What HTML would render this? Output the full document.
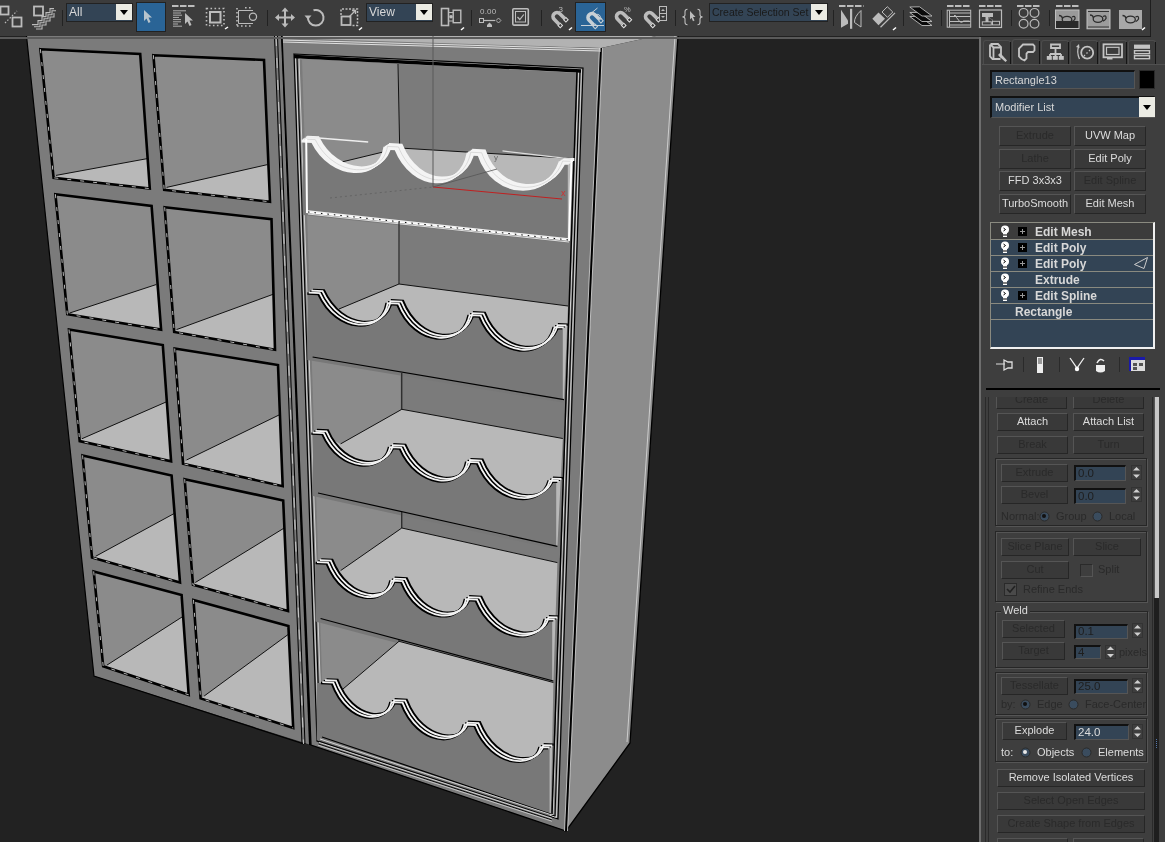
<!DOCTYPE html>
<html><head><meta charset="utf-8"><style>
html,body{margin:0;padding:0;}
#wrap{position:absolute;left:0;top:0;width:1165px;height:842px;will-change:transform;}
body{width:1165px;height:842px;overflow:hidden;position:relative;background:#3e3e3e;font-family:"Liberation Sans",sans-serif;}
.ab{position:absolute;}
.clip{position:absolute;overflow:hidden;}
.btn{position:absolute;box-sizing:border-box;background:#393939;border:1px solid #262626;border-top-color:#555;border-left-color:#555;text-align:center;font-size:11px;white-space:nowrap;overflow:hidden;}
.fld{position:absolute;box-sizing:border-box;background:#334455;border-top:2px solid #111;border-left:2px solid #111;border-right:1px solid #555;border-bottom:1px solid #555;font-size:11.5px;padding-left:2px;white-space:nowrap;overflow:hidden;}
.lbl{position:absolute;font-size:11px;line-height:13px;white-space:nowrap;}
.grp{position:absolute;box-sizing:border-box;border:1px solid #262626;box-shadow:1px 1px 0 #555 inset, 1px 1px 0 #555;}
.tab{position:absolute;box-sizing:border-box;background:#3b3b3b;border:1px solid #4c4c4c;border-bottom:none;border-radius:3px 3px 0 0;}
.stk{position:absolute;font-size:12px;font-weight:bold;color:#d8d8d8;white-space:nowrap;}
</style></head><body><div id="wrap">
<div class="ab" style="left:0;top:0;width:1151px;height:37px;background:#3c3c3c;border-bottom:1px solid #1a1a1a;box-sizing:border-box"></div>
<div class="ab" style="left:1150px;top:0;width:1px;height:36px;background:#1e1e1e"></div>
<div class="ab" style="left:62px;top:10px;width:1px;height:16px;background:#222"></div>
<div class="fld" style="left:66px;top:3px;width:67px;height:19px;line-height:17px;color:#d8d8d8;font-size:12px;padding-left:2px;box-sizing:border-box;border:1px solid #222;overflow:hidden;white-space:nowrap">All</div>
<div class="ab" style="left:116px;top:4px;width:16px;height:16px;background:#ebebe3"></div>
<svg class="ab" style="left:116px;top:4px" width="16" height="16"><path d="M4,6 h8 l-4,5z" fill="#000"/></svg>
<div class="ab" style="left:136px;top:2px;width:30px;height:30px;background:#2a6496;border:1px solid #222;box-sizing:border-box"></div>
<div class="ab" style="left:267px;top:10px;width:1px;height:16px;background:#222"></div>
<div class="ab" style="left:471px;top:10px;width:1px;height:16px;background:#222"></div>
<div class="ab" style="left:541px;top:10px;width:1px;height:16px;background:#222"></div>
<div class="ab" style="left:675px;top:10px;width:1px;height:16px;background:#222"></div>
<div class="ab" style="left:833px;top:10px;width:1px;height:16px;background:#222"></div>
<div class="ab" style="left:903px;top:10px;width:1px;height:16px;background:#222"></div>
<div class="ab" style="left:941px;top:10px;width:1px;height:16px;background:#222"></div>
<div class="ab" style="left:1011px;top:10px;width:1px;height:16px;background:#222"></div>
<div class="ab" style="left:1049px;top:10px;width:1px;height:16px;background:#222"></div>
<div class="fld" style="left:366px;top:3px;width:67px;height:19px;line-height:17px;color:#d8d8d8;font-size:12px;padding-left:2px;box-sizing:border-box;border:1px solid #222;overflow:hidden;white-space:nowrap">View</div>
<div class="ab" style="left:416px;top:4px;width:16px;height:16px;background:#ebebe3"></div>
<svg class="ab" style="left:416px;top:4px" width="16" height="16"><path d="M4,6 h8 l-4,5z" fill="#000"/></svg>
<div class="fld" style="left:709px;top:3px;width:119px;height:19px;line-height:17px;color:#1a1a1a;font-size:10.5px;padding-left:2px;box-sizing:border-box;border:1px solid #222;overflow:hidden;white-space:nowrap">Create Selection Set</div>
<div class="ab" style="left:811px;top:4px;width:16px;height:16px;background:#ebebe3"></div>
<svg class="ab" style="left:811px;top:4px" width="16" height="16"><path d="M4,6 h8 l-4,5z" fill="#000"/></svg>
<div class="ab" style="left:575px;top:2px;width:31px;height:30px;background:#2a6496;border:1px solid #222;box-sizing:border-box"></div>
<svg class="ab" style="left:0;top:0" width="1151" height="36">
<g fill="none" stroke="#bcbcbc" stroke-width="1.8">
<rect x="0.5" y="6.5" width="8" height="8"/><rect x="12.5" y="17.5" width="9" height="9"/>
<rect x="34" y="6.5" width="9" height="9"/>
</g>
<path d="M5,23 L17,11" stroke="#bcbcbc" stroke-width="1.2" stroke-dasharray="1.5 1.8"/>
<g fill="none" stroke="#bcbcbc" stroke-width="1.1">
<path d="M32,24.6 h6 v-4 h4 v-4 h4 v-4 h4 v-4 h4"/>
<path d="M34,26.8 h6 v-4 h4 v-4 h4 v-4 h4 v-4 h4"/>
<path d="M36,29 h6 v-4 h4 v-4 h4 v-4 h4 v-4"/>
</g>
<!-- select by name -->
<path d="M172,6 h22.5" stroke="#bcbcbc" stroke-width="1.8" stroke-dasharray="6.5 1.5"/>
<g stroke="#bcbcbc" stroke-width="0.9">
<path d="M173,10.8 h13 M173,13 h8 M173,15.2 h9 M173,17.4 h6 M173,19.6 h8 M173,21.8 h8 M173,24 h5 M173,26.2 h9"/>
</g>
<path d="M185,13 l8,7.5 h-3.5 l2,4.5 -2,1 -2,-4.5 -2.5,2.5z" fill="#bcbcbc"/>
<!-- active select -->
<path d="M144,10 l8,7.5 h-3.5 l2,4.5 -2,1 -2,-4.5 -2.5,2.5z" fill="#b8c4cc"/>
<!-- region -->
<rect x="206.5" y="8.5" width="17.5" height="17" fill="none" stroke="#bcbcbc" stroke-width="1.6" stroke-dasharray="1.6 2.4"/>
<rect x="210" y="12" width="10.5" height="10.5" fill="none" stroke="#bcbcbc" stroke-width="2"/>
<path d="M225,29 l3,-2" stroke="#fff" stroke-width="1.5"/>
<!-- window crossing -->
<path d="M245,7.8 h7 M237,8 v19 M237,26 h16" stroke="#bcbcbc" stroke-width="1.6" stroke-dasharray="1.6 2.4" fill="none"/>
<path d="M253,10.5 h-14.5 v13 h14.5" stroke="#bcbcbc" stroke-width="1" fill="none"/>
<circle cx="253" cy="16.7" r="3.6" fill="#3c3c3c" stroke="#bcbcbc" stroke-width="1.2"/>
<!-- move -->
<g stroke="#bcbcbc" stroke-width="2" fill="none"><path d="M285,10 v15 M277.5,17.5 h15"/></g>
<g fill="#bcbcbc"><path d="M285,7.5 l-3.5,4 h7z M285,27.5 l-3.5,-4 h7z M275,17.5 l4,-3.5 v7z M295,17.5 l-4,-3.5 v7z"/></g>
<!-- rotate -->
<path d="M313.5,10.3 a7.8,7.8 0 1,1 -5.5,6.5" stroke="#bcbcbc" stroke-width="2" fill="none"/>
<path d="M304.5,15.5 l3.5,4 l3.5,-4z" fill="#bcbcbc"/>
<!-- scale -->
<path d="M341,15 v-6 h16.5 v16.5 h-6" stroke="#bcbcbc" stroke-width="1.5" stroke-dasharray="2 1.5" fill="none"/>
<rect x="341.5" y="16.5" width="9" height="8.5" stroke="#bcbcbc" stroke-width="1.8" fill="none"/>
<path d="M349,17 l6.5,-6.5 M352,10.5 h3.5 v3.5" stroke="#bcbcbc" stroke-width="1.3" fill="none"/>
<path d="M359,30 l3,-2.5" stroke="#fff" stroke-width="1.5"/>
<!-- align -->
<g stroke="#bcbcbc" fill="none">
<rect x="441.5" y="8.5" width="7" height="17" stroke-width="1.6"/>
<rect x="453.2" y="10.2" width="7.6" height="12.5" stroke-width="1.4"/>
<path d="M448.5,12.5 h5 M448.5,21 h5" stroke-width="1"/>
</g>
<circle cx="451" cy="16.8" r="1.8" fill="#bcbcbc"/>
<path d="M461,30 l3,-2.5" stroke="#fff" stroke-width="1.5"/>
<!-- 0.00 -->
<text x="480" y="14.3" font-family="Liberation Sans" font-size="8" fill="#bcbcbc" letter-spacing="0.2">0.00</text>
<rect x="479.5" y="18.5" width="4" height="4" fill="none" stroke="#bcbcbc" stroke-width="1"/>
<path d="M484,20.5 h11" stroke="#bcbcbc" stroke-width="1.2"/>
<path d="M498.5,18 l2.4,2.5 -2.4,2.5 -2.4,-2.5z" fill="none" stroke="#bcbcbc" stroke-width="0.9"/>
<path d="M487,27 v-2 l2.5,-2.5 l2.5,2.5 v2z" fill="#bcbcbc"/>
<!-- checkbox -->
<rect x="512.8" y="8.8" width="15.5" height="16.3" rx="1" fill="none" stroke="#bcbcbc" stroke-width="1.6"/>
<rect x="515.5" y="11.5" width="10" height="10.5" fill="none" stroke="#bcbcbc" stroke-width="1"/>
<path d="M517.5,17 l2.3,2.5 l4,-5" stroke="#bcbcbc" stroke-width="1.2" fill="none"/>
<!-- magnets -->
<g transform="translate(557,16.5) rotate(-45)"><path d="M-4,6.5 V0 A4,4 0 0 1 4,0 V6.5" fill="none" stroke="#bcbcbc" stroke-width="3.6"/><rect x="-5.6" y="7" width="3.2" height="3.2" fill="none" stroke="#e0e0e0" stroke-width="1"/><rect x="2.4" y="7" width="3.2" height="3.2" fill="none" stroke="#e0e0e0" stroke-width="1"/></g>
<text x="558.5" y="11.8" font-family="Liberation Sans" font-size="8" fill="#bcbcbc">3</text>
<path d="M569,30 l3,-2.5" stroke="#fff" stroke-width="1.5"/>
<g transform="translate(592,17.5) rotate(-45)"><path d="M-4,6.5 V0 A4,4 0 0 1 4,0 V6.5" fill="none" stroke="#c8d0d6" stroke-width="3.6"/><rect x="-5.6" y="7" width="3.2" height="3.2" fill="none" stroke="#c8d0d6" stroke-width="1"/><rect x="2.4" y="7" width="3.2" height="3.2" fill="none" stroke="#c8d0d6" stroke-width="1"/></g>
<path d="M592,12.5 l5.5,-4.5" stroke="#c8d0d6" stroke-width="1"/>
<path d="M596,14.5 q4,-1 5,4" stroke="#c8d0d6" stroke-width="1" fill="none"/>
<path d="M601,19 l-1.5,-1 h3z" fill="#c8d0d6"/>
<path d="M581,25.5 h23" stroke="#c8d0d6" stroke-width="1"/>
<g transform="translate(620.5,16.5) rotate(-45)"><path d="M-4,6.5 V0 A4,4 0 0 1 4,0 V6.5" fill="none" stroke="#bcbcbc" stroke-width="3.6"/><rect x="-5.6" y="7" width="3.2" height="3.2" fill="none" stroke="#e0e0e0" stroke-width="1"/><rect x="2.4" y="7" width="3.2" height="3.2" fill="none" stroke="#e0e0e0" stroke-width="1"/></g>
<text x="624" y="12" font-family="Liberation Sans" font-size="7.5" fill="#bcbcbc">%</text>
<g transform="translate(649.5,16.5) rotate(-45)"><path d="M-4,6.5 V0 A4,4 0 0 1 4,0 V6.5" fill="none" stroke="#bcbcbc" stroke-width="3.6"/><rect x="-5.6" y="7" width="3.2" height="3.2" fill="none" stroke="#e0e0e0" stroke-width="1"/><rect x="2.4" y="7" width="3.2" height="3.2" fill="none" stroke="#e0e0e0" stroke-width="1"/></g>
<rect x="659.5" y="6.5" width="7" height="14" fill="#3c3c3c" stroke="#bcbcbc" stroke-width="1"/>
<path d="M659.5,13.5 h7" stroke="#bcbcbc" stroke-width="1"/>
<path d="M661,11 l2,-2 2,2z M661,16 l2,2 2,-2z" fill="#bcbcbc"/>
<!-- braces -->
<path d="M687.5,9.2 q-2.5,0 -2.5,2.5 v3 q0,2 -2.5,2.2 q2.5,0.2 2.5,2.2 v3.2 q0,2.5 2.5,2.5 M697.5,9.2 q2.5,0 2.5,2.5 v3 q0,2 2.5,2.2 q-2.5,0.2 -2.5,2.2 v3.2 q0,2.5 -2.5,2.5" fill="none" stroke="#bcbcbc" stroke-width="1.1"/>
<path d="M690,11 l5.5,6 h-2.5 l1.5,3.5 -1.5,0.8 -1.5,-3.5 -1.5,1.8z" fill="#bcbcbc"/>
<!-- mirror -->
<path d="M839,6 h24.5" stroke="#bcbcbc" stroke-width="1.8" stroke-dasharray="6.5 1.5"/>
<path d="M841,9.8 L848,20.5 V23.8 L841,27.8z" fill="#bcbcbc"/>
<rect x="850" y="8.8" width="2.2" height="20" fill="#bcbcbc"/>
<path d="M861,10.5 Q854,17 854.5,22.5 L861,27z" fill="none" stroke="#bcbcbc" stroke-width="1"/>
<!-- eraser -->
<path d="M872.3,18.8 L878.5,12.5 L885,18.8 L878.5,25.2z" fill="#bcbcbc"/>
<path d="M882,12 L887.3,6.7 L892.8,12 L887.5,17.3z" fill="none" stroke="#bcbcbc" stroke-width="1"/>
<path d="M880.5,27.3 L895,12.9" stroke="#bcbcbc" stroke-width="1.2"/>
<path d="M893,30 l3,-2.5" stroke="#fff" stroke-width="1.5"/>
<!-- layers -->
<g fill="#0a0a0a" stroke="#bcbcbc" stroke-width="0.9">
<path d="M919.5,16.3 L909.8,16.5 L922,25.5 L932,25.5z"/>
<path d="M919.5,12.3 L909.8,12.5 L922,21.5 L932,21.5z"/>
<path d="M919.5,6.8 L909.8,7 L922,16 L932,16z"/>
</g>
<!-- curve editor -->
<path d="M947,6 h24" stroke="#bcbcbc" stroke-width="1.8" stroke-dasharray="6.5 1.5"/>
<g stroke="#bcbcbc" fill="none" stroke-width="1">
<rect x="947.2" y="10.2" width="23.5" height="17"/>
<path d="M949.5,10.5 v16.5 M949.5,13 h21 M949.5,16.5 h21 M949.5,21.5 h21 M949.5,25 h21"/>
<path d="M953,17 l2,-2 l1.5,2.5 l2,2.5 q2.5,4 5,1 h6"/>
</g>
<!-- schematic -->
<path d="M979,6 h23" stroke="#bcbcbc" stroke-width="1.8" stroke-dasharray="6.5 1.5"/>
<rect x="979.5" y="10" width="22" height="17.5" fill="none" stroke="#bcbcbc" stroke-width="1.2"/>
<rect x="982" y="13" width="11" height="4" fill="#bcbcbc"/>
<rect x="985.5" y="17" width="3" height="5" fill="#bcbcbc"/>
<rect x="982.3" y="21.8" width="9" height="3.2" fill="none" stroke="#bcbcbc" stroke-width="1"/>
<rect x="992.5" y="21.3" width="7" height="3.6" fill="none" stroke="#bcbcbc" stroke-width="1"/>
<path d="M989,17.5 l4,3" stroke="#bcbcbc" stroke-width="0.8" stroke-dasharray="1 1"/>
<!-- material -->
<path d="M1017,6 h24" stroke="#bcbcbc" stroke-width="1.8" stroke-dasharray="6.5 1.5"/>
<g fill="none" stroke="#bcbcbc" stroke-width="1.2">
<circle cx="1023.6" cy="12.9" r="4.4"/><circle cx="1034.5" cy="12.9" r="4.4"/>
<circle cx="1023.6" cy="23.7" r="4.4"/><circle cx="1034.5" cy="23.7" r="4.4"/>
</g>
<!-- render setup -->
<path d="M1056,6 h24" stroke="#bcbcbc" stroke-width="1.8" stroke-dasharray="6.5 1.5"/>
<rect x="1055.5" y="10" width="23.5" height="18.5" fill="#9a9a9a" stroke="#c0c0c0" stroke-width="1"/>
<rect x="1056" y="21" width="22.5" height="7" fill="#2a2a2a"/>
<!-- rendered frame -->
<rect x="1087" y="9.8" width="23" height="19" fill="#9c9c9c" stroke="#c0c0c0" stroke-width="1"/>
<path d="M1088,11.5 h21 M1088,27 h21" stroke="#333" stroke-width="1"/>
<!-- render -->
<rect x="1119" y="10" width="23" height="19" fill="#a8a8a8"/>
<path d="M1142,30 l3,-2.5" stroke="#fff" stroke-width="1.5"/>
<g fill="none" stroke="#2c2c2c" stroke-width="1.3">
<ellipse cx="1067" cy="19.5" rx="4.8" ry="3.2"/><path d="M1059,15.5 q3,0 3.5,3 M1072,17 q3.5,-2 3,2 q-1,2 -3,2.5"/>
<ellipse cx="1098" cy="19" rx="4.8" ry="3.4"/><path d="M1090,15 q3,0 3.5,3 M1103,16.5 q3.5,-2 3,2 q-1,2 -3,2.5"/>
<ellipse cx="1130.5" cy="19.5" rx="4.8" ry="3.4"/><path d="M1122.5,15.5 q3,0 3.5,3 M1135.5,17 q3.5,-2 3,2 q-1,2 -3,2.5"/>
</g>
</svg>
<svg class="ab" style="left:0;top:36px" width="980" height="806" viewBox="0 36 980 806">
<rect x="0" y="36" width="980" height="806" fill="#222222"/>
<polygon points="26.5,36.0 283.0,36.0 311.0,745.0 94.0,676.0" fill="#7b7b7b"/>
<polyline points="26.5,36.0 94.0,676.0 304.0,744.0" fill="none" stroke="#000" stroke-width="1.2"/>
<polygon points="40.4,49.2 140.2,54.0 149.8,188.6 53.6,177.8" fill="#8b8b8b"/>
<polygon points="56.0,175.4 147.4,158.6 149.8,188.6 53.6,177.8" fill="#b8b8b8"/>
<line x1="56" y1="175.4" x2="147.4" y2="158.6" stroke="#111" stroke-width="1"/>
<polygon points="40.4,49.2 140.2,54.0 149.8,188.6 53.6,177.8" fill="none" stroke="#000" stroke-width="2.6"/>
<polyline points="40.4,49.2 53.6,177.8 149.8,188.6" fill="none" stroke="#e6e6e6" stroke-width="0.8" stroke-dasharray="4 9"/>
<polygon points="153.4,55.2 264.0,60.0 270.0,201.8 164.2,189.8" fill="#8b8b8b"/>
<polygon points="166.6,187.4 267.5,164.6 270.0,201.8 164.2,189.8" fill="#b8b8b8"/>
<line x1="166.6" y1="187.4" x2="267.5" y2="164.6" stroke="#111" stroke-width="1"/>
<polygon points="153.4,55.2 264.0,60.0 270.0,201.8 164.2,189.8" fill="none" stroke="#000" stroke-width="2.6"/>
<polyline points="153.4,55.2 164.2,189.8 270.0,201.8" fill="none" stroke="#e6e6e6" stroke-width="0.8" stroke-dasharray="4 9"/>
<polygon points="55.4,194.2 151.6,206.0 161.1,329.6 67.3,314.2" fill="#8b8b8b"/>
<polygon points="69.7,313.0 156.3,284.5 161.1,329.6 67.3,314.2" fill="#b8b8b8"/>
<line x1="69.7" y1="313" x2="156.3" y2="284.5" stroke="#111" stroke-width="1"/>
<polygon points="55.4,194.2 151.6,206.0 161.1,329.6 67.3,314.2" fill="none" stroke="#000" stroke-width="2.6"/>
<polyline points="55.4,194.2 67.3,314.2 161.1,329.6" fill="none" stroke="#e6e6e6" stroke-width="0.8" stroke-dasharray="4 9"/>
<polygon points="164.7,207.3 271.5,219.2 275.0,349.8 174.2,332.0" fill="#8b8b8b"/>
<polygon points="176.5,329.6 273.9,294.0 275.0,349.8 174.2,332.0" fill="#b8b8b8"/>
<line x1="176.5" y1="329.6" x2="273.9" y2="294" stroke="#111" stroke-width="1"/>
<polygon points="164.7,207.3 271.5,219.2 275.0,349.8 174.2,332.0" fill="none" stroke="#000" stroke-width="2.6"/>
<polyline points="164.7,207.3 174.2,332.0 275.0,349.8" fill="none" stroke="#e6e6e6" stroke-width="0.8" stroke-dasharray="4 9"/>
<polygon points="69.0,329.5 162.8,345.0 171.1,461.3 79.7,441.1" fill="#8b8b8b"/>
<polygon points="82.0,438.7 166.3,401.9 171.1,461.3 79.7,441.1" fill="#b8b8b8"/>
<line x1="82" y1="438.7" x2="166.3" y2="401.9" stroke="#111" stroke-width="1"/>
<polygon points="69.0,329.5 162.8,345.0 171.1,461.3 79.7,441.1" fill="none" stroke="#000" stroke-width="2.6"/>
<polyline points="69.0,329.5 79.7,441.1 171.1,461.3" fill="none" stroke="#e6e6e6" stroke-width="0.8" stroke-dasharray="4 9"/>
<polygon points="174.7,348.5 278.0,365.0 282.7,486.2 183.0,463.7" fill="#8b8b8b"/>
<polygon points="186.5,460.0 279.0,415.0 282.7,486.2 183.0,463.7" fill="#b8b8b8"/>
<line x1="186.5" y1="460" x2="279" y2="415" stroke="#111" stroke-width="1"/>
<polygon points="174.7,348.5 278.0,365.0 282.7,486.2 183.0,463.7" fill="none" stroke="#000" stroke-width="2.6"/>
<polyline points="174.7,348.5 183.0,463.7 282.7,486.2" fill="none" stroke="#e6e6e6" stroke-width="0.8" stroke-dasharray="4 9"/>
<polygon points="82.6,455.4 171.6,475.6 180.0,582.5 92.0,557.5" fill="#8b8b8b"/>
<polygon points="95.6,556.3 174.0,513.6 180.0,582.5 92.0,557.5" fill="#b8b8b8"/>
<line x1="95.6" y1="556.3" x2="174" y2="513.6" stroke="#111" stroke-width="1"/>
<polygon points="82.6,455.4 171.6,475.6 180.0,582.5 92.0,557.5" fill="none" stroke="#000" stroke-width="2.6"/>
<polyline points="82.6,455.4 92.0,557.5 180.0,582.5" fill="none" stroke="#e6e6e6" stroke-width="0.8" stroke-dasharray="4 9"/>
<polygon points="184.7,479.2 283.2,500.5 288.0,611.0 193.0,584.8" fill="#8b8b8b"/>
<polygon points="195.3,582.5 284.4,527.9 288.0,611.0 193.0,584.8" fill="#b8b8b8"/>
<line x1="195.3" y1="582.5" x2="284.4" y2="527.9" stroke="#111" stroke-width="1"/>
<polygon points="184.7,479.2 283.2,500.5 288.0,611.0 193.0,584.8" fill="none" stroke="#000" stroke-width="2.6"/>
<polyline points="184.7,479.2 193.0,584.8 288.0,611.0" fill="none" stroke="#e6e6e6" stroke-width="0.8" stroke-dasharray="4 9"/>
<polygon points="93.7,571.4 181.6,595.0 188.7,694.8 103.2,666.3" fill="#8b8b8b"/>
<polygon points="106.8,665.2 182.8,616.5 188.7,694.8 103.2,666.3" fill="#b8b8b8"/>
<line x1="106.8" y1="665.2" x2="182.8" y2="616.5" stroke="#111" stroke-width="1"/>
<polygon points="93.7,571.4 181.6,595.0 188.7,694.8 103.2,666.3" fill="none" stroke="#000" stroke-width="2.6"/>
<polyline points="93.7,571.4 103.2,666.3 188.7,694.8" fill="none" stroke="#e6e6e6" stroke-width="0.8" stroke-dasharray="4 9"/>
<polygon points="193.5,599.9 288.4,626.0 293.2,728.0 200.6,698.4" fill="#8b8b8b"/>
<polygon points="204.2,696.0 288.4,634.3 293.2,728.0 200.6,698.4" fill="#b8b8b8"/>
<line x1="204.2" y1="696" x2="288.4" y2="634.3" stroke="#111" stroke-width="1"/>
<polygon points="193.5,599.9 288.4,626.0 293.2,728.0 200.6,698.4" fill="none" stroke="#000" stroke-width="2.6"/>
<polyline points="193.5,599.9 200.6,698.4 293.2,728.0" fill="none" stroke="#e6e6e6" stroke-width="0.8" stroke-dasharray="4 9"/>
<line x1="274.5" y1="36" x2="302" y2="744" stroke="#000" stroke-width="1"/>
<line x1="277.5" y1="36" x2="305" y2="744" stroke="#000" stroke-width="1"/>
<line x1="276" y1="36" x2="303.5" y2="744" stroke="#ddd" stroke-width="0.8" stroke-dasharray="10 12"/>
<line x1="282" y1="36" x2="310" y2="745" stroke="#000" stroke-width="2"/>
<polygon points="282.0,36.0 656.0,36.0 601.0,48.0 283.0,40.0" fill="#b2b2b2"/>
<polygon points="601.0,48.0 656.0,36.0 678.0,36.0 630.0,743.0 566.0,831.0" fill="#8c8c8c"/>
<polygon points="282.0,38.0 601.0,48.0 566.0,831.0 311.0,745.0" fill="#7b7b7b"/>
<polyline points="678.0,36.0 630.0,743.0 566.0,831.0 311.0,745.0 282.0,36.0" fill="none" stroke="#000" stroke-width="1.3"/>
<line x1="675" y1="36" x2="627" y2="742" stroke="#ddd" stroke-width="0.8"/>
<line x1="601" y1="48" x2="566" y2="831" stroke="#000" stroke-width="3"/>
<line x1="599.5" y1="48" x2="564.5" y2="831" stroke="#ddd" stroke-width="0.8"/>
<line x1="602.5" y1="48" x2="567.5" y2="831" stroke="#ddd" stroke-width="0.8"/>
<line x1="283" y1="40" x2="601" y2="49" stroke="#e0e0e0" stroke-width="1"/>
<line x1="283" y1="42" x2="601" y2="51" stroke="#e0e0e0" stroke-width="1"/>
<polygon points="294.0,54.0 583.0,68.0 558.0,819.0 317.0,741.0" fill="none" stroke="#000" stroke-width="1.2"/>
<polygon points="295.5,55.5 581.5,69.5 556.5,817.5 318.5,739.5" fill="none" stroke="#ddd" stroke-width="0.9"/>
<polygon points="297.0,57.0 580.0,71.0 555.0,816.0 320.0,738.0" fill="none" stroke="#000" stroke-width="1"/>
<polygon points="299.0,58.5 578.5,72.5 553.0,814.5 322.0,736.5" fill="none" stroke="#ddd" stroke-width="0.9"/>
<polygon points="302.0,59.0 577.0,73.0 551.0,814.0 324.0,737.0" fill="#7b7b7b"/>
<polygon points="302.0,59.0 399.0,64.0 402.0,740.0 324.0,737.0" fill="#8b8b8b"/>
<line x1="294" y1="56.5" x2="581" y2="71" stroke="#000" stroke-width="3.5"/>
<line x1="577" y1="72" x2="552" y2="814" stroke="#000" stroke-width="1.5"/>
<polygon points="399.7,148.0 572.0,158.4 569.0,240.0 308.0,212.0 305.2,138.0 338.4,162.8" fill="#b8b8b8"/>
<polyline points="338.4,162.8 399.7,148.0 572.0,158.4" fill="none" stroke="#111" stroke-width="1"/>
<line x1="398" y1="64" x2="399.7" y2="148" stroke="#111" stroke-width="1"/>
<path d="M303.7,138.0 L314.7,138.5 C333.9,177.4 381.6,177.4 386.9,145.3 L397.9,145.8 C415.1,188.9 462.8,188.9 470.1,151.1 L481.1,151.6 C496.0,196.2 549.4,196.2 562.0,159.9 L571.0,160.2  L570,159.9 L570,240 L305,212 L305,138 Z" fill="#787878" transform="translate(-2.2,3.0)"/>
<path d="M303.7,138.0 L314.7,138.5 C333.9,177.4 381.6,177.4 386.9,145.3 L397.9,145.8 C415.1,188.9 462.8,188.9 470.1,151.1 L481.1,151.6 C496.0,196.2 549.4,196.2 562.0,159.9 L571.0,160.2 " fill="none" stroke="#f4f4f4" stroke-width="3" transform="translate(-2.20,3.00)"/>
<path d="M303.7,138.0 L314.7,138.5 C333.9,177.4 381.6,177.4 386.9,145.3 L397.9,145.8 C415.1,188.9 462.8,188.9 470.1,151.1 L481.1,151.6 C496.0,196.2 549.4,196.2 562.0,159.9 L571.0,160.2 " fill="none" stroke="#f4f4f4" stroke-width="3" transform="translate(-0.80,2.08)"/>
<path d="M303.7,138.0 L314.7,138.5 C333.9,177.4 381.6,177.4 386.9,145.3 L397.9,145.8 C415.1,188.9 462.8,188.9 470.1,151.1 L481.1,151.6 C496.0,196.2 549.4,196.2 562.0,159.9 L571.0,160.2 " fill="none" stroke="#f4f4f4" stroke-width="3" transform="translate(0.60,1.15)"/>
<path d="M303.7,138.0 L314.7,138.5 C333.9,177.4 381.6,177.4 386.9,145.3 L397.9,145.8 C415.1,188.9 462.8,188.9 470.1,151.1 L481.1,151.6 C496.0,196.2 549.4,196.2 562.0,159.9 L571.0,160.2 " fill="none" stroke="#f4f4f4" stroke-width="3" transform="translate(2.00,0.22)"/>
<path d="M303.7,138.0 L314.7,138.5 C333.9,177.4 381.6,177.4 386.9,145.3 L397.9,145.8 C415.1,188.9 462.8,188.9 470.1,151.1 L481.1,151.6 C496.0,196.2 549.4,196.2 562.0,159.9 L571.0,160.2 " fill="none" stroke="#f4f4f4" stroke-width="3" transform="translate(3.40,-0.70)"/>
<path d="M303.7,138.0 L314.7,138.5 C333.9,177.4 381.6,177.4 386.9,145.3 L397.9,145.8 C415.1,188.9 462.8,188.9 470.1,151.1 L481.1,151.6 C496.0,196.2 549.4,196.2 562.0,159.9 L571.0,160.2 " fill="none" stroke="#cfcfcf" stroke-width="0.7" transform="translate(0.60,1.15)"/>
<polyline points="306.2,139.0 307.0,212.0 569.0,240.0 571.5,159.9" fill="none" stroke="#fff" stroke-width="2"/>
<line x1="308" y1="211" x2="569" y2="239" stroke="#f0f0f0" stroke-width="1.5"/>
<line x1="308" y1="212" x2="569" y2="240" stroke="#000" stroke-width="1" stroke-dasharray="1.5 5"/>
<line x1="308" y1="214" x2="569" y2="242" stroke="#e0e0e0" stroke-width="1"/>
<line x1="306.2" y1="137" x2="368.2" y2="142" stroke="#eee" stroke-width="1.5"/>
<line x1="502.5" y1="150.9" x2="570.5" y2="158.9" stroke="#ddd" stroke-width="1.2"/>
<polygon points="399.0,284.0 568.0,306.0 564.0,399.6 312.6,357.0 311.0,290.5 339.0,309.0" fill="#b8b8b8"/>
<polyline points="339.0,309.0 399.0,284.0 568.0,306.0" fill="none" stroke="#111" stroke-width="1"/>
<line x1="399" y1="222" x2="399" y2="284" stroke="#111" stroke-width="1"/>
<path d="M309.5,290.5 L320.5,291.0 C338.9,331.3 383.7,331.3 388.5,301.0 L399.5,301.5 C416.9,344.9 463.8,344.9 470.5,313.0 L481.5,313.5 C498.7,356.9 547.6,356.9 555.5,325.0 L564.5,325.3  L565,325 L565,399.6 L309.6,357 L309.6,290.5 Z" fill="#787878" transform="translate(-2.2,3.0)"/>
<path d="M309.5,290.5 L320.5,291.0 C338.9,331.3 383.7,331.3 388.5,301.0 L399.5,301.5 C416.9,344.9 463.8,344.9 470.5,313.0 L481.5,313.5 C498.7,356.9 547.6,356.9 555.5,325.0 L564.5,325.3 " fill="none" stroke="#000" stroke-width="2.3" transform="translate(-2.20,3.00)"/>
<path d="M309.5,290.5 L320.5,291.0 C338.9,331.3 383.7,331.3 388.5,301.0 L399.5,301.5 C416.9,344.9 463.8,344.9 470.5,313.0 L481.5,313.5 C498.7,356.9 547.6,356.9 555.5,325.0 L564.5,325.3 " fill="none" stroke="#000" stroke-width="2.3" transform="translate(0.60,1.15)"/>
<path d="M309.5,290.5 L320.5,291.0 C338.9,331.3 383.7,331.3 388.5,301.0 L399.5,301.5 C416.9,344.9 463.8,344.9 470.5,313.0 L481.5,313.5 C498.7,356.9 547.6,356.9 555.5,325.0 L564.5,325.3 " fill="none" stroke="#000" stroke-width="2.3" transform="translate(3.40,-0.70)"/>
<path d="M309.5,290.5 L320.5,291.0 C338.9,331.3 383.7,331.3 388.5,301.0 L399.5,301.5 C416.9,344.9 463.8,344.9 470.5,313.0 L481.5,313.5 C498.7,356.9 547.6,356.9 555.5,325.0 L564.5,325.3 " fill="none" stroke="#f2f2f2" stroke-width="1.8" transform="translate(-0.80,2.08)"/>
<path d="M309.5,290.5 L320.5,291.0 C338.9,331.3 383.7,331.3 388.5,301.0 L399.5,301.5 C416.9,344.9 463.8,344.9 470.5,313.0 L481.5,313.5 C498.7,356.9 547.6,356.9 555.5,325.0 L564.5,325.3 " fill="none" stroke="#f2f2f2" stroke-width="1.8" transform="translate(2.00,0.22)"/>
<line x1="312.6" y1="357" x2="564" y2="399.6" stroke="#000" stroke-width="1.2"/>
<polygon points="401.8,409.3 562.8,438.5 557.4,546.3 318.0,493.0 315.0,430.6 340.6,443.9" fill="#b8b8b8"/>
<polyline points="340.6,443.9 401.8,409.3 562.8,438.5" fill="none" stroke="#111" stroke-width="1"/>
<line x1="401.8" y1="373" x2="401.8" y2="409.3" stroke="#111" stroke-width="1"/>
<path d="M313.5,430.6 L324.5,431.1 C341.5,470.4 385.3,470.4 390.9,445.0 L401.9,445.5 C419.8,486.8 463.5,486.8 468.1,459.8 L479.1,460.3 C496.8,504.2 544.0,504.2 550.5,478.5 L559.5,478.8  L558.4,478.5 L558.4,546.3 L315,493 L315,430.6 Z" fill="#787878" transform="translate(-2.2,3.0)"/>
<path d="M313.5,430.6 L324.5,431.1 C341.5,470.4 385.3,470.4 390.9,445.0 L401.9,445.5 C419.8,486.8 463.5,486.8 468.1,459.8 L479.1,460.3 C496.8,504.2 544.0,504.2 550.5,478.5 L559.5,478.8 " fill="none" stroke="#000" stroke-width="2.3" transform="translate(-2.20,3.00)"/>
<path d="M313.5,430.6 L324.5,431.1 C341.5,470.4 385.3,470.4 390.9,445.0 L401.9,445.5 C419.8,486.8 463.5,486.8 468.1,459.8 L479.1,460.3 C496.8,504.2 544.0,504.2 550.5,478.5 L559.5,478.8 " fill="none" stroke="#000" stroke-width="2.3" transform="translate(0.60,1.15)"/>
<path d="M313.5,430.6 L324.5,431.1 C341.5,470.4 385.3,470.4 390.9,445.0 L401.9,445.5 C419.8,486.8 463.5,486.8 468.1,459.8 L479.1,460.3 C496.8,504.2 544.0,504.2 550.5,478.5 L559.5,478.8 " fill="none" stroke="#000" stroke-width="2.3" transform="translate(3.40,-0.70)"/>
<path d="M313.5,430.6 L324.5,431.1 C341.5,470.4 385.3,470.4 390.9,445.0 L401.9,445.5 C419.8,486.8 463.5,486.8 468.1,459.8 L479.1,460.3 C496.8,504.2 544.0,504.2 550.5,478.5 L559.5,478.8 " fill="none" stroke="#f2f2f2" stroke-width="1.8" transform="translate(-0.80,2.08)"/>
<path d="M313.5,430.6 L324.5,431.1 C341.5,470.4 385.3,470.4 390.9,445.0 L401.9,445.5 C419.8,486.8 463.5,486.8 468.1,459.8 L479.1,460.3 C496.8,504.2 544.0,504.2 550.5,478.5 L559.5,478.8 " fill="none" stroke="#f2f2f2" stroke-width="1.8" transform="translate(2.00,0.22)"/>
<line x1="318" y1="493" x2="557.4" y2="546.3" stroke="#000" stroke-width="1.2"/>
<polygon points="401.8,528.0 557.4,562.6 553.4,681.0 320.6,618.5 319.3,560.0 340.6,570.6" fill="#b8b8b8"/>
<polyline points="340.6,570.6 401.8,528.0 557.4,562.6" fill="none" stroke="#111" stroke-width="1"/>
<line x1="401.8" y1="512" x2="401.8" y2="528" stroke="#111" stroke-width="1"/>
<path d="M317.8,560.0 L328.8,560.5 C345.9,602.8 387.9,602.8 392.3,578.5 L403.3,579.0 C420.4,621.3 462.4,621.3 466.8,597.0 L477.8,597.5 C496.3,641.4 541.7,641.4 546.5,617.0 L555.5,617.3  L554.4,617 L554.4,681 L317.6,618.5 L317.6,560 Z" fill="#787878" transform="translate(-2.2,3.0)"/>
<path d="M317.8,560.0 L328.8,560.5 C345.9,602.8 387.9,602.8 392.3,578.5 L403.3,579.0 C420.4,621.3 462.4,621.3 466.8,597.0 L477.8,597.5 C496.3,641.4 541.7,641.4 546.5,617.0 L555.5,617.3 " fill="none" stroke="#000" stroke-width="2.3" transform="translate(-2.20,3.00)"/>
<path d="M317.8,560.0 L328.8,560.5 C345.9,602.8 387.9,602.8 392.3,578.5 L403.3,579.0 C420.4,621.3 462.4,621.3 466.8,597.0 L477.8,597.5 C496.3,641.4 541.7,641.4 546.5,617.0 L555.5,617.3 " fill="none" stroke="#000" stroke-width="2.3" transform="translate(0.60,1.15)"/>
<path d="M317.8,560.0 L328.8,560.5 C345.9,602.8 387.9,602.8 392.3,578.5 L403.3,579.0 C420.4,621.3 462.4,621.3 466.8,597.0 L477.8,597.5 C496.3,641.4 541.7,641.4 546.5,617.0 L555.5,617.3 " fill="none" stroke="#000" stroke-width="2.3" transform="translate(3.40,-0.70)"/>
<path d="M317.8,560.0 L328.8,560.5 C345.9,602.8 387.9,602.8 392.3,578.5 L403.3,579.0 C420.4,621.3 462.4,621.3 466.8,597.0 L477.8,597.5 C496.3,641.4 541.7,641.4 546.5,617.0 L555.5,617.3 " fill="none" stroke="#f2f2f2" stroke-width="1.8" transform="translate(-0.80,2.08)"/>
<path d="M317.8,560.0 L328.8,560.5 C345.9,602.8 387.9,602.8 392.3,578.5 L403.3,579.0 C420.4,621.3 462.4,621.3 466.8,597.0 L477.8,597.5 C496.3,641.4 541.7,641.4 546.5,617.0 L555.5,617.3 " fill="none" stroke="#f2f2f2" stroke-width="1.8" transform="translate(2.00,0.22)"/>
<line x1="320.6" y1="618.5" x2="553.4" y2="681" stroke="#000" stroke-width="1.2"/>
<polygon points="399.0,641.3 553.4,682.5 550.8,814.0 322.0,737.0 324.6,680.0 343.0,689.0" fill="#b8b8b8"/>
<polyline points="343.0,689.0 399.0,641.3 553.4,682.5" fill="none" stroke="#111" stroke-width="1"/>
<line x1="399" y1="640" x2="399" y2="641.3" stroke="#111" stroke-width="1"/>
<path d="M323.1,680.0 L334.1,680.5 C349.8,722.3 388.2,722.3 392.3,700.0 L403.3,700.5 C420.1,743.5 461.1,743.5 465.5,722.4 L476.5,722.9 C494.0,766.3 536.8,766.3 541.3,745.0 L550.3,745.3  L551.8,745 L551.8,814 L319,737 L319,680 Z" fill="#787878" transform="translate(-2.2,3.0)"/>
<path d="M323.1,680.0 L334.1,680.5 C349.8,722.3 388.2,722.3 392.3,700.0 L403.3,700.5 C420.1,743.5 461.1,743.5 465.5,722.4 L476.5,722.9 C494.0,766.3 536.8,766.3 541.3,745.0 L550.3,745.3 " fill="none" stroke="#000" stroke-width="2.3" transform="translate(-2.20,3.00)"/>
<path d="M323.1,680.0 L334.1,680.5 C349.8,722.3 388.2,722.3 392.3,700.0 L403.3,700.5 C420.1,743.5 461.1,743.5 465.5,722.4 L476.5,722.9 C494.0,766.3 536.8,766.3 541.3,745.0 L550.3,745.3 " fill="none" stroke="#000" stroke-width="2.3" transform="translate(0.60,1.15)"/>
<path d="M323.1,680.0 L334.1,680.5 C349.8,722.3 388.2,722.3 392.3,700.0 L403.3,700.5 C420.1,743.5 461.1,743.5 465.5,722.4 L476.5,722.9 C494.0,766.3 536.8,766.3 541.3,745.0 L550.3,745.3 " fill="none" stroke="#000" stroke-width="2.3" transform="translate(3.40,-0.70)"/>
<path d="M323.1,680.0 L334.1,680.5 C349.8,722.3 388.2,722.3 392.3,700.0 L403.3,700.5 C420.1,743.5 461.1,743.5 465.5,722.4 L476.5,722.9 C494.0,766.3 536.8,766.3 541.3,745.0 L550.3,745.3 " fill="none" stroke="#f2f2f2" stroke-width="1.8" transform="translate(-0.80,2.08)"/>
<path d="M323.1,680.0 L334.1,680.5 C349.8,722.3 388.2,722.3 392.3,700.0 L403.3,700.5 C420.1,743.5 461.1,743.5 465.5,722.4 L476.5,722.9 C494.0,766.3 536.8,766.3 541.3,745.0 L550.3,745.3 " fill="none" stroke="#f2f2f2" stroke-width="1.8" transform="translate(2.00,0.22)"/>
<line x1="322" y1="737" x2="550.8" y2="814" stroke="#000" stroke-width="1.2"/>
<line x1="320.0" y1="739" x2="552" y2="815" stroke="#ddd" stroke-width="0.9"/>
<line x1="319.34" y1="741.2" x2="552" y2="817.2" stroke="#000" stroke-width="0.9"/>
<line x1="318.98" y1="742.4" x2="552" y2="818.4" stroke="#ddd" stroke-width="0.9"/>
<line x1="318.5" y1="744" x2="552" y2="820" stroke="#000" stroke-width="0.9"/>
<line x1="318.14" y1="745.2" x2="552" y2="821.2" stroke="#ccc" stroke-width="0.9"/>
<line x1="433" y1="36" x2="433" y2="187" stroke="#5a5a5a" stroke-width="1"/>
<line x1="433" y1="187" x2="562" y2="199" stroke="#c02020" stroke-width="1"/>
<text x="561" y="196" font-family="Liberation Sans" font-size="9" fill="#d03030">x</text>
<line x1="433" y1="187" x2="497" y2="169" stroke="#555" stroke-width="0.8"/>
<text x="494" y="160" font-family="Liberation Sans" font-size="8" fill="#666">y</text>
<line x1="330" y1="198" x2="433" y2="187" stroke="#555" stroke-width="0.6" stroke-dasharray="2 3"/>
<rect x="0" y="37" width="980" height="2" fill="#5a5a5a"/>
</svg>
<div class="ab" style="left:979px;top:37px;width:2px;height:805px;background:#6e6e6e"></div>
<div class="tab" style="left:983px;top:40px;width:28px;height:24px"></div>
<div class="ab" style="left:1010px;top:42px;width:1px;height:22px;background:#151515"></div>
<div class="tab" style="left:1012px;top:39px;width:28px;height:25px"></div>
<div class="ab" style="left:1039px;top:41px;width:1px;height:23px;background:#151515"></div>
<div class="tab" style="left:1041px;top:40px;width:28px;height:24px"></div>
<div class="ab" style="left:1068px;top:42px;width:1px;height:22px;background:#151515"></div>
<div class="tab" style="left:1070px;top:40px;width:28px;height:24px"></div>
<div class="ab" style="left:1097px;top:42px;width:1px;height:22px;background:#151515"></div>
<div class="tab" style="left:1099px;top:40px;width:28px;height:24px"></div>
<div class="ab" style="left:1126px;top:42px;width:1px;height:22px;background:#151515"></div>
<div class="tab" style="left:1128px;top:40px;width:28px;height:24px"></div>
<div class="ab" style="left:1155px;top:42px;width:1px;height:22px;background:#151515"></div>
<div class="ab" style="left:982px;top:64px;width:183px;height:1px;background:#505050"></div>
<svg class="ab" style="left:983px;top:39px" width="182" height="25">
<g fill="none" stroke="#c4c4c4" stroke-width="1.8">
<path d="M7.5,5 h7.5 l3,3 v9 l-1,1 M7,5.5 v12 l2.5,2.5 h8"/>
<path d="M7.5,5.5 l3,3 h7 M10.5,8.5 v11"/>
<path d="M38.5,20 l-2.5,-2.5 v-8 l4,-4 h10 l1.5,1.5 v4.5 l-1.5,1.5 h-5 l-1.5,1.5 v5 l-2,2z"/>
<path d="M68,5.5 h9 v3.5 h-9z M72.5,9 v6 M67,15 h11 M67,15 v2 M72.5,15 v2 M78,15 v2"/>
<circle cx="104.2" cy="13.7" r="6"/>
<rect x="120.5" y="5.3" width="18.5" height="13"/>
<rect x="123.5" y="8.3" width="12.5" height="7.2" stroke-width="1.2"/>
<rect x="151.5" y="11.7" width="15" height="3" stroke-width="1.4"/>
<rect x="151.5" y="16.7" width="15" height="3" stroke-width="1.4"/>
</g>
<g fill="#c4c4c4">
<rect x="63.8" y="17" width="5" height="3.8"/><rect x="69.8" y="17" width="5" height="3.8"/><rect x="75.8" y="17" width="5" height="3.8"/>
<path d="M17,14 l3,3 l4,4.5 l-1.5,1.5 l-4.5,-4 l-3,-3z"/>
<rect x="151" y="5.6" width="16" height="4.2"/>
<rect x="124" y="19" width="5.5" height="1.5"/>
<path d="M93,8 l3,-3 l0.5,4z"/>
</g>
<path d="M95.5,8 q-2,5 1,12" stroke="#c4c4c4" stroke-width="1.3" fill="none"/>
<path d="M101,17 l1,-1 M103.5,14.5 l1,-1 M106,12 l1,-1" stroke="#c4c4c4" stroke-width="1.3"/>
</svg>
<div class="fld" style="left:990px;top:70px;width:145px;height:19px;line-height:17px;color:#d8d8d8;font-size:11px;padding-left:3px;box-sizing:border-box">Rectangle13</div>
<div class="ab" style="left:1139px;top:70px;width:16px;height:19px;background:#000;border:1px solid #2a2a2a;box-sizing:border-box"></div>
<div class="fld" style="left:990px;top:96px;width:165px;height:22px;line-height:19px;color:#d8d8d8;font-size:11px;padding-left:3px;box-sizing:border-box">Modifier List</div>
<div class="ab" style="left:1139px;top:97px;width:16px;height:20px;background:#ebebe3"></div>
<svg class="ab" style="left:1139px;top:97px" width="16" height="20"><path d="M4,8 h8 l-4,5z" fill="#000"/></svg>
<div class="btn" style="left:999px;top:126px;width:72px;height:20px;line-height:17px;color:#2a2a2a">Extrude</div>
<div class="btn" style="left:1074px;top:126px;width:72px;height:20px;line-height:17px;color:#dcdcdc">UVW Map</div>
<div class="btn" style="left:999px;top:149px;width:72px;height:20px;line-height:17px;color:#2a2a2a">Lathe</div>
<div class="btn" style="left:1074px;top:149px;width:72px;height:20px;line-height:17px;color:#dcdcdc">Edit Poly</div>
<div class="btn" style="left:999px;top:171px;width:72px;height:20px;line-height:17px;color:#dcdcdc">FFD 3x3x3</div>
<div class="btn" style="left:1074px;top:171px;width:72px;height:20px;line-height:17px;color:#2a2a2a">Edit Spline</div>
<div class="btn" style="left:999px;top:194px;width:72px;height:20px;line-height:17px;color:#dcdcdc">TurboSmooth</div>
<div class="btn" style="left:1074px;top:194px;width:72px;height:20px;line-height:17px;color:#dcdcdc">Edit Mesh</div>
<div class="ab" style="left:990px;top:222px;width:165px;height:127px;background:#334455;border-left:1px solid #8a8a80;border-top:1px solid #8a8a80;border-right:2px solid #f0f0f0;border-bottom:2px solid #f0f0f0;box-sizing:border-box"></div>
<div class="ab" style="left:991px;top:223px;width:162px;height:16px;background:#3c3c3c"></div>
<div class="ab" style="left:991px;top:239px;width:162px;height:1px;background:#8a8a80"></div>
<div class="stk" style="left:1035px;top:224px;height:16px;line-height:16px">Edit Mesh</div>
<svg class="ab" style="left:1000px;top:225px" width="10" height="13"><circle cx="5" cy="4.5" r="4" fill="#fff"/><rect x="3" y="8" width="4" height="4" fill="#fff"/><path d="M3.5,3 l2,1.5 -2,1.5" stroke="#000" stroke-width="1" fill="none"/><rect x="3" y="9.5" width="4" height="1" fill="#000"/></svg>
<svg class="ab" style="left:1018px;top:227px" width="9" height="9"><rect width="9" height="9" fill="#000"/><path d="M4.5,2 v5 M2,4.5 h5" stroke="#999" stroke-width="1"/></svg>
<div class="ab" style="left:991px;top:255px;width:162px;height:1px;background:#8a8a80"></div>
<div class="stk" style="left:1035px;top:240px;height:16px;line-height:16px">Edit Poly</div>
<svg class="ab" style="left:1000px;top:241px" width="10" height="13"><circle cx="5" cy="4.5" r="4" fill="#fff"/><rect x="3" y="8" width="4" height="4" fill="#fff"/><path d="M3.5,3 l2,1.5 -2,1.5" stroke="#000" stroke-width="1" fill="none"/><rect x="3" y="9.5" width="4" height="1" fill="#000"/></svg>
<svg class="ab" style="left:1018px;top:243px" width="9" height="9"><rect width="9" height="9" fill="#000"/><path d="M4.5,2 v5 M2,4.5 h5" stroke="#999" stroke-width="1"/></svg>
<div class="ab" style="left:991px;top:271px;width:162px;height:1px;background:#8a8a80"></div>
<div class="stk" style="left:1035px;top:256px;height:16px;line-height:16px">Edit Poly</div>
<svg class="ab" style="left:1000px;top:257px" width="10" height="13"><circle cx="5" cy="4.5" r="4" fill="#fff"/><rect x="3" y="8" width="4" height="4" fill="#fff"/><path d="M3.5,3 l2,1.5 -2,1.5" stroke="#000" stroke-width="1" fill="none"/><rect x="3" y="9.5" width="4" height="1" fill="#000"/></svg>
<svg class="ab" style="left:1018px;top:259px" width="9" height="9"><rect width="9" height="9" fill="#000"/><path d="M4.5,2 v5 M2,4.5 h5" stroke="#999" stroke-width="1"/></svg>
<div class="ab" style="left:991px;top:287px;width:162px;height:1px;background:#8a8a80"></div>
<div class="stk" style="left:1035px;top:272px;height:16px;line-height:16px">Extrude</div>
<svg class="ab" style="left:1000px;top:273px" width="10" height="13"><circle cx="5" cy="4.5" r="4" fill="#fff"/><rect x="3" y="8" width="4" height="4" fill="#fff"/><path d="M3.5,3 l2,1.5 -2,1.5" stroke="#000" stroke-width="1" fill="none"/><rect x="3" y="9.5" width="4" height="1" fill="#000"/></svg>
<div class="ab" style="left:991px;top:303px;width:162px;height:1px;background:#8a8a80"></div>
<div class="stk" style="left:1035px;top:288px;height:16px;line-height:16px">Edit Spline</div>
<svg class="ab" style="left:1000px;top:289px" width="10" height="13"><circle cx="5" cy="4.5" r="4" fill="#fff"/><rect x="3" y="8" width="4" height="4" fill="#fff"/><path d="M3.5,3 l2,1.5 -2,1.5" stroke="#000" stroke-width="1" fill="none"/><rect x="3" y="9.5" width="4" height="1" fill="#000"/></svg>
<svg class="ab" style="left:1018px;top:291px" width="9" height="9"><rect width="9" height="9" fill="#000"/><path d="M4.5,2 v5 M2,4.5 h5" stroke="#999" stroke-width="1"/></svg>
<div class="ab" style="left:991px;top:319px;width:162px;height:1px;background:#8a8a80"></div>
<div class="stk" style="left:1015px;top:304px;height:16px;line-height:16px">Rectangle</div>
<svg class="ab" style="left:1133px;top:256px" width="16" height="14"><path d="M14.5,1.5 L1.5,8.5 L11,12.5Z" fill="none" stroke="#ccc" stroke-width="1"/></svg>
<svg class="ab" style="left:994px;top:354px" width="160" height="22">
<path d="M2,10 h9" stroke="#ddd" stroke-width="1"/><path d="M10,6 l4,2 h4 v6 h-4 l-4,2z" fill="none" stroke="#ddd" stroke-width="1.3"/>
<rect x="29" y="3" width="1" height="15" fill="#2a2a2a"/>
<rect x="43" y="3" width="6" height="16" fill="#eee"/><rect x="44" y="4" width="4" height="6" fill="#999"/>
<rect x="65" y="3" width="1" height="15" fill="#2a2a2a"/>
<path d="M76,4 l7,10 l7,-10" stroke="#eee" stroke-width="1.3" fill="none"/><circle cx="83" cy="15" r="2.2" fill="#fff"/>
<path d="M102,11 h9 v6 q-4.5,3 -9,0z" fill="#eee"/><path d="M103,9 q3,-6 7,-2" stroke="#eee" stroke-width="1.5" fill="none"/>
<rect x="125" y="3" width="1" height="15" fill="#2a2a2a"/>
<rect x="135" y="3" width="16" height="14" fill="#1a1aaa"/><rect x="137" y="6" width="14" height="11" fill="#ddd"/>
<path d="M139,9 h4 v3 h-4z M145,9 h4 v3 h-4z M139,13 h4 v3 h-4z" fill="#555"/>
</svg>
<div class="ab" style="left:986px;top:388px;width:174px;height:2px;background:#000"></div>
<div class="ab" style="left:985px;top:397px;width:1px;height:445px;background:#2a2a2a"></div>
<div class="ab" style="left:988px;top:397px;width:1px;height:445px;background:#2a2a2a"></div>
<div class="ab" style="left:1152px;top:397px;width:1px;height:445px;background:#2a2a2a"></div>
<div class="ab" style="left:1154px;top:397px;width:5px;height:201px;background:#c8c8c8;border-left:1px solid #555;box-sizing:border-box"></div>
<div class="ab" style="left:1154px;top:598px;width:5px;height:244px;background:#1e1e1e"></div>
<div class="ab" style="left:1156px;top:739px;width:1px;height:9px;border-left:1px dotted #5577aa"></div>
<div class="clip" style="left:989px;top:397px;width:163px;height:445px">
<div class="btn" style="left:7px;top:-6px;width:71px;height:18px;line-height:15px;color:#2a2a2a">Create</div>
<div class="btn" style="left:84px;top:-6px;width:71px;height:18px;line-height:15px;color:#2a2a2a">Delete</div>
</div>
<div class="btn" style="left:997px;top:413px;width:71px;height:18px;line-height:15px;color:#dcdcdc">Attach</div>
<div class="btn" style="left:1073px;top:413px;width:71px;height:18px;line-height:15px;color:#dcdcdc">Attach List</div>
<div class="btn" style="left:997px;top:436px;width:71px;height:18px;line-height:15px;color:#2a2a2a">Break</div>
<div class="btn" style="left:1073px;top:436px;width:71px;height:18px;line-height:15px;color:#2a2a2a">Turn</div>
<div class="grp" style="left:995px;top:458px;width:152px;height:68px"></div>
<div class="btn" style="left:1001px;top:464px;width:67px;height:18px;line-height:15px;color:#2a2a2a">Extrude</div>
<div class="fld" style="left:1074px;top:465px;width:52px;height:16px;line-height:12px;color:#1e1e1e">0.0</div>
<svg class="ab" style="left:1131px;top:465px" width="11" height="15"><rect x="0.5" y="0.5" width="10" height="14" fill="none" stroke="#333"/><path d="M2.0,5.5 L5.5,2.0 L9.0,5.5Z" fill="#cfcfcf"/><path d="M2.0,9.5 L5.5,13.0 L9.0,9.5Z" fill="#cfcfcf"/></svg>
<div class="btn" style="left:1001px;top:486px;width:67px;height:18px;line-height:15px;color:#2a2a2a">Bevel</div>
<div class="fld" style="left:1074px;top:488px;width:52px;height:16px;line-height:12px;color:#1e1e1e">0.0</div>
<svg class="ab" style="left:1131px;top:487px" width="11" height="15"><rect x="0.5" y="0.5" width="10" height="14" fill="none" stroke="#333"/><path d="M2.0,5.5 L5.5,2.0 L9.0,5.5Z" fill="#cfcfcf"/><path d="M2.0,9.5 L5.5,13.0 L9.0,9.5Z" fill="#cfcfcf"/></svg>
<div class="lbl" style="left:1001px;top:510px;color:#2a2a2a;font-size:11px">Normal:</div>
<svg class="ab" style="left:1039px;top:511px" width="11" height="11"><circle cx="5.5" cy="5.5" r="4.5" fill="#3a4c5e" stroke="#2a2a2a" stroke-width="1"/><circle cx="5" cy="5" r="2" fill="#111"/></svg>
<div class="lbl" style="left:1056px;top:510px;color:#2a2a2a;font-size:11px">Group</div>
<svg class="ab" style="left:1092px;top:511px" width="11" height="11"><circle cx="5.5" cy="5.5" r="4.5" fill="#3a4c5e" stroke="#2a2a2a" stroke-width="1"/></svg>
<div class="lbl" style="left:1109px;top:510px;color:#2a2a2a;font-size:11px">Local</div>
<div class="grp" style="left:995px;top:531px;width:152px;height:71px"></div>
<div class="btn" style="left:1001px;top:538px;width:68px;height:18px;line-height:15px;color:#2a2a2a">Slice Plane</div>
<div class="btn" style="left:1073px;top:538px;width:68px;height:18px;line-height:15px;color:#2a2a2a">Slice</div>
<div class="btn" style="left:1001px;top:561px;width:68px;height:18px;line-height:15px;color:#2a2a2a">Cut</div>
<div class="ab" style="left:1080px;top:564px;width:13px;height:13px;border:1px solid #2a2a2a;border-right-color:#555;border-bottom-color:#555;box-sizing:border-box"></div>
<div class="lbl" style="left:1098px;top:563px;color:#2a2a2a;font-size:11px">Split</div>
<div class="ab" style="left:1004px;top:583px;width:13px;height:13px;background:#4a4a4a;border:1px solid #2a2a2a;box-sizing:border-box"></div>
<svg class="ab" style="left:1004px;top:583px" width="13" height="13"><path d="M3,6 l3,3 l5,-6" stroke="#222" stroke-width="1.6" fill="none"/></svg>
<div class="lbl" style="left:1023px;top:583px;color:#2a2a2a;font-size:11px">Refine Ends</div>
<div class="grp" style="left:995px;top:611px;width:153px;height:57px"></div>
<div class="lbl" style="left:1001px;top:604px;color:#dcdcdc;background:#3e3e3e;padding:0 2px">Weld</div>
<div class="btn" style="left:1002px;top:620px;width:63px;height:18px;line-height:15px;color:#2a2a2a">Selected</div>
<div class="fld" style="left:1074px;top:624px;width:54px;height:15px;line-height:11px;color:#1e1e1e">0.1</div>
<svg class="ab" style="left:1132px;top:623px" width="11" height="15"><rect x="0.5" y="0.5" width="10" height="14" fill="none" stroke="#333"/><path d="M2.0,5.5 L5.5,2.0 L9.0,5.5Z" fill="#cfcfcf"/><path d="M2.0,9.5 L5.5,13.0 L9.0,9.5Z" fill="#cfcfcf"/></svg>
<div class="btn" style="left:1002px;top:642px;width:63px;height:18px;line-height:15px;color:#2a2a2a">Target</div>
<div class="fld" style="left:1074px;top:645px;width:27px;height:14px;line-height:10px;color:#1e1e1e">4</div>
<svg class="ab" style="left:1105px;top:645px" width="11" height="14"><rect x="0.5" y="0.5" width="10" height="13" fill="none" stroke="#333"/><path d="M2.0,5.0 L5.5,1.5 L9.0,5.0Z" fill="#cfcfcf"/><path d="M2.0,9.0 L5.5,12.5 L9.0,9.0Z" fill="#cfcfcf"/></svg>
<div class="lbl" style="left:1119px;top:646px;color:#2a2a2a;font-size:11px">pixels</div>
<div class="grp" style="left:995px;top:672px;width:152px;height:43px"></div>
<div class="btn" style="left:1001px;top:677px;width:67px;height:18px;line-height:15px;color:#2a2a2a">Tessellate</div>
<div class="fld" style="left:1074px;top:679px;width:54px;height:15px;line-height:11px;color:#1e1e1e">25.0</div>
<svg class="ab" style="left:1132px;top:678px" width="11" height="15"><rect x="0.5" y="0.5" width="10" height="14" fill="none" stroke="#333"/><path d="M2.0,5.5 L5.5,2.0 L9.0,5.5Z" fill="#cfcfcf"/><path d="M2.0,9.5 L5.5,13.0 L9.0,9.5Z" fill="#cfcfcf"/></svg>
<div class="lbl" style="left:1001px;top:698px;color:#2a2a2a;font-size:11px">by:</div>
<svg class="ab" style="left:1020px;top:699px" width="11" height="11"><circle cx="5.5" cy="5.5" r="4.5" fill="#3a4c5e" stroke="#2a2a2a" stroke-width="1"/><circle cx="5" cy="5" r="2" fill="#111"/></svg>
<div class="lbl" style="left:1037px;top:698px;color:#2a2a2a;font-size:11px">Edge</div>
<svg class="ab" style="left:1068px;top:699px" width="11" height="11"><circle cx="5.5" cy="5.5" r="4.5" fill="#3a4c5e" stroke="#2a2a2a" stroke-width="1"/></svg>
<div class="lbl" style="left:1085px;top:698px;color:#2a2a2a;font-size:11px">Face-Center</div>
<div class="grp" style="left:995px;top:718px;width:152px;height:44px"></div>
<div class="btn" style="left:1002px;top:722px;width:65px;height:18px;line-height:15px;color:#dcdcdc">Explode</div>
<div class="fld" style="left:1074px;top:724px;width:55px;height:16px;line-height:12px;color:#dcdcdc">24.0</div>
<svg class="ab" style="left:1132px;top:724px" width="11" height="15"><rect x="0.5" y="0.5" width="10" height="14" fill="none" stroke="#333"/><path d="M2.0,5.5 L5.5,2.0 L9.0,5.5Z" fill="#cfcfcf"/><path d="M2.0,9.5 L5.5,13.0 L9.0,9.5Z" fill="#cfcfcf"/></svg>
<div class="lbl" style="left:1001px;top:746px;color:#dcdcdc;font-size:11px">to:</div>
<svg class="ab" style="left:1020px;top:747px" width="11" height="11"><circle cx="5.5" cy="5.5" r="4.5" fill="#3a4c5e" stroke="#2a2a2a" stroke-width="1"/><circle cx="5" cy="5" r="2" fill="#e8e8e8"/></svg>
<div class="lbl" style="left:1037px;top:746px;color:#dcdcdc;font-size:11px">Objects</div>
<svg class="ab" style="left:1081px;top:747px" width="11" height="11"><circle cx="5.5" cy="5.5" r="4.5" fill="#3a4c5e" stroke="#2a2a2a" stroke-width="1"/></svg>
<div class="lbl" style="left:1098px;top:746px;color:#dcdcdc;font-size:11px">Elements</div>
<div class="btn" style="left:997px;top:769px;width:148px;height:18px;line-height:15px;color:#dcdcdc">Remove Isolated Vertices</div>
<div class="btn" style="left:997px;top:792px;width:148px;height:18px;line-height:15px;color:#2a2a2a">Select Open Edges</div>
<div class="btn" style="left:997px;top:815px;width:148px;height:18px;line-height:15px;color:#2a2a2a">Create Shape from Edges</div>
<div class="btn" style="left:997px;top:838px;width:71px;height:18px;line-height:15px;color:#2a2a2a">Weld</div>
<div class="btn" style="left:1073px;top:838px;width:71px;height:18px;line-height:15px;color:#2a2a2a">Edit</div>
</div></body></html>
